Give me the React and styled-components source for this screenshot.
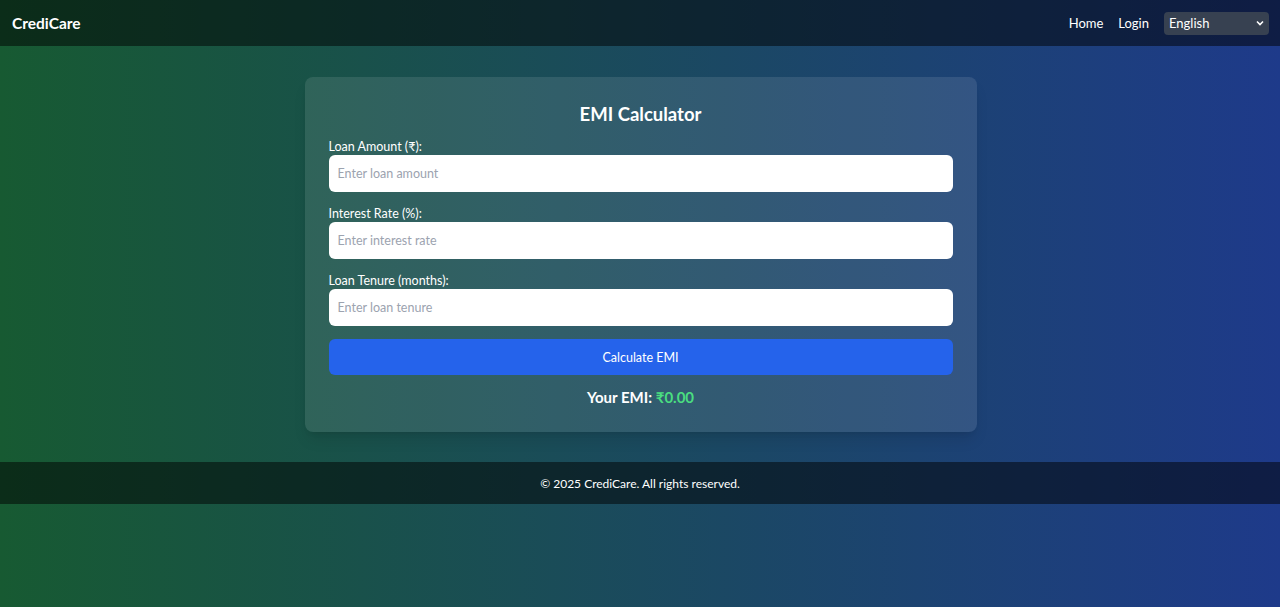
import React from "react";
import styled, { createGlobalStyle } from "styled-components";

const GlobalStyle = createGlobalStyle`
  html, body { margin: 0; padding: 0; }
  body {
    font-family: Lato, "Noto Sans", "DejaVu Sans", sans-serif;
    color: #fff;
  }
  * { box-sizing: border-box; }
`;

const Page = styled.div`
  min-height: 100vh;
  background: linear-gradient(to right, #175a32, #1e3a8a);
  display: flex;
  flex-direction: column;
`;

const Header = styled.header`
  height: 46px;
  padding: 0 11px 0 12px;
  background: rgba(0, 0, 0, 0.5);
  display: flex;
  align-items: center;
  justify-content: space-between;
`;

const Logo = styled.div`
  font-size: 15.5px;
  font-weight: 700;
  color: #fff;
`;

const Nav = styled.nav`
  display: flex;
  align-items: center;
  gap: 15px;
`;

const NavLink = styled.a`
  color: #fff;
  font-size: 13px;
  text-decoration: none;
`;

const SelectWrap = styled.div`
  position: relative;
  width: 105px;
  height: 23px;
`;

const Select = styled.select`
  appearance: none;
  width: 100%;
  height: 100%;
  background: #374151;
  color: #fff;
  border: none;
  border-radius: 4px;
  padding: 0 18px 0 5px;
  font-family: inherit;
  font-size: 13px;
  outline: none;
`;

const Chevron = styled.svg`
  position: absolute;
  right: 5px;
  top: 8px;
  pointer-events: none;
`;

const Main = styled.main`
  padding: 31px 0 30px 1px;
  display: flex;
  justify-content: center;
`;

const Card = styled.div`
  width: 672px;
  padding: 24px;
  border-radius: 8px;
  background: rgba(255, 255, 255, 0.1);
  box-shadow: 0 10px 15px -3px rgba(0, 0, 0, 0.1), 0 4px 6px -4px rgba(0, 0, 0, 0.1);
`;

const Title = styled.h2`
  margin: 0 0 11px;
  text-align: center;
  font-size: 18.5px;
  line-height: 26px;
  font-weight: 700;
`;

const Field = styled.div`
  margin-bottom: ${(p) => (p.$last ? "13px" : "13px")};
`;

const Label = styled.label`
  display: block;
  font-size: 12.5px;
  line-height: 17px;
  color: #fff;
`;

const Input = styled.input`
  display: block;
  width: 100%;
  height: 37px;
  border: none;
  border-radius: 6px;
  background: #fff;
  padding: 0 9px;
  font-family: inherit;
  font-size: 12.5px;
  color: #111;
  outline: none;
  &::placeholder { color: #9ca3af; }
`;

const Button = styled.button`
  display: block;
  width: 100%;
  height: 36px;
  border: none;
  border-radius: 6px;
  background: #2563eb;
  color: #fff;
  font-family: inherit;
  font-size: 12.5px;
  cursor: pointer;
`;

const Result = styled.div`
  margin-top: 11px;
  text-align: center;
  font-size: 15px;
  line-height: 22px;
  font-weight: 700;
`;

const Amount = styled.span`
  color: #4ade80;
`;

const Footer = styled.footer`
  height: 42px;
  background: rgba(0, 0, 0, 0.5);
  display: flex;
  align-items: center;
  justify-content: center;
  font-size: 12px;
`;

export default function App() {
  return (
    <>
      <GlobalStyle />
      <Page>
        <Header>
          <Logo>CrediCare</Logo>
          <Nav>
            <NavLink href="#">Home</NavLink>
            <NavLink href="#">Login</NavLink>
            <SelectWrap>
              <Select defaultValue="en">
                <option value="en">English</option>
                <option value="hi">हिन्दी</option>
              </Select>
              <Chevron width="8" height="6" viewBox="0 0 8 6">
                <path d="M1 1.5 L4 4.5 L7 1.5" fill="none" stroke="#fff" strokeWidth="1.6" />
              </Chevron>
            </SelectWrap>
          </Nav>
        </Header>
        <Main>
          <Card>
            <Title>EMI Calculator</Title>
            <Field>
              <Label>Loan Amount (₹):</Label>
              <Input placeholder="Enter loan amount" />
            </Field>
            <Field>
              <Label>Interest Rate (%):</Label>
              <Input placeholder="Enter interest rate" />
            </Field>
            <Field $last>
              <Label>Loan Tenure (months):</Label>
              <Input placeholder="Enter loan tenure" />
            </Field>
            <Button>Calculate EMI</Button>
            <Result>
              Your EMI: <Amount>₹0.00</Amount>
            </Result>
          </Card>
        </Main>
        <Footer>© 2025 CrediCare. All rights reserved.</Footer>
      </Page>
    </>
  );
}
